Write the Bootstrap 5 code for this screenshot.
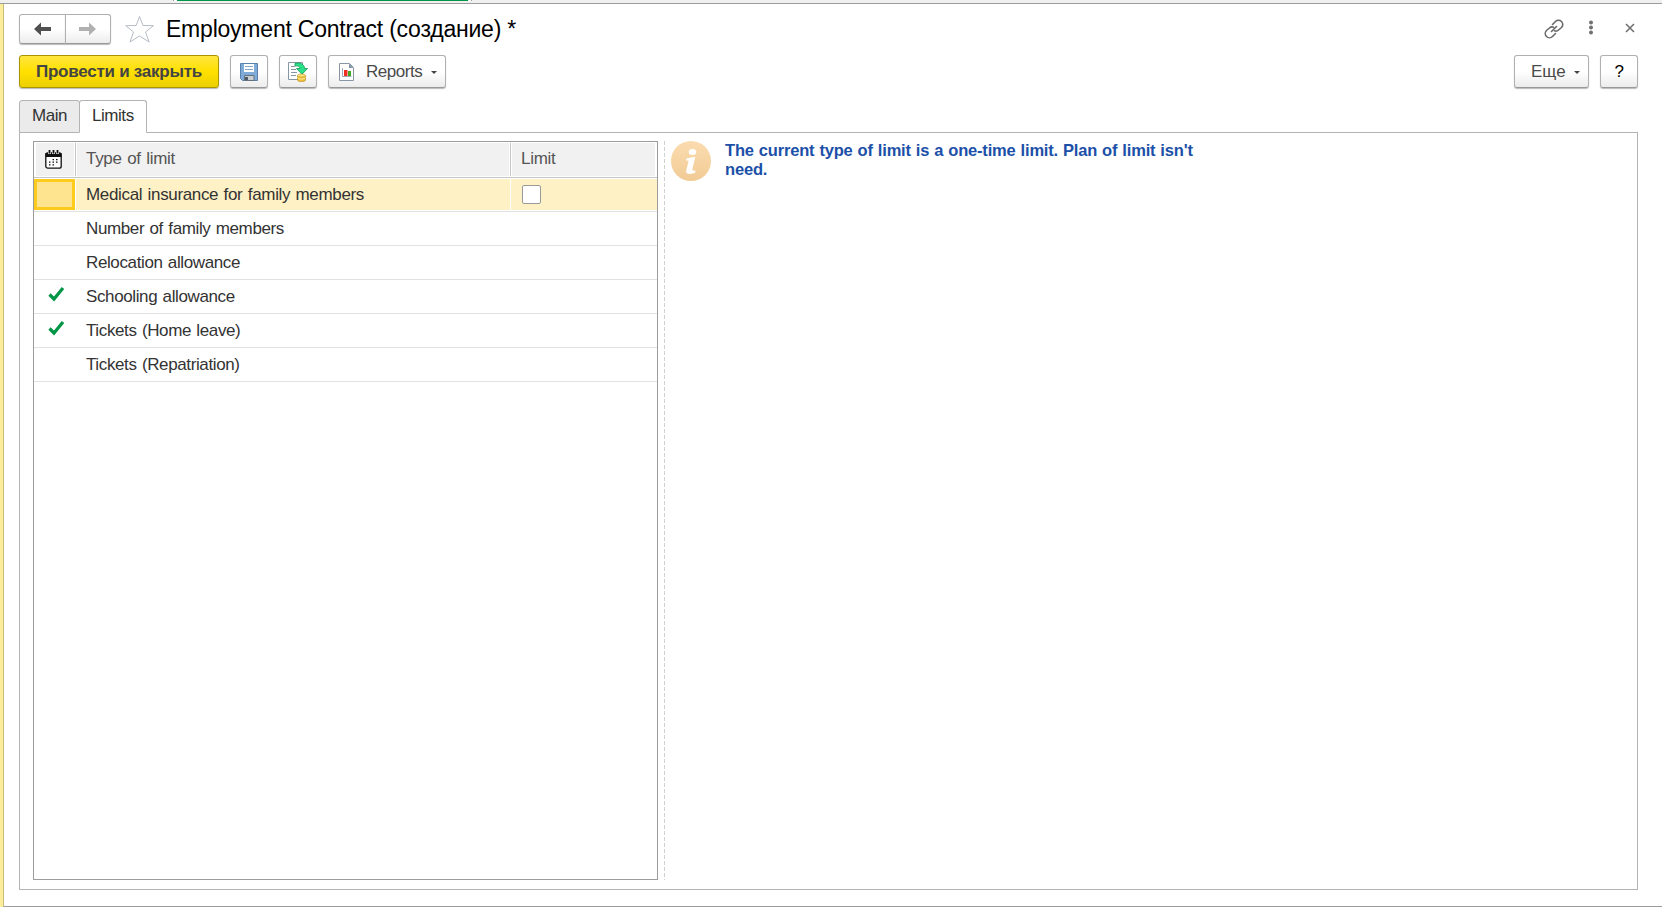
<!DOCTYPE html>
<html lang="ru">
<head>
<meta charset="utf-8">
<title>Employment Contract</title>
<link href="https://cdn.jsdelivr.net/npm/bootstrap@5.3.0/dist/css/bootstrap.min.css" rel="stylesheet">
<style>
body{font:17px/20px "Liberation Sans",Arial,sans-serif;letter-spacing:-.38px;word-spacing:1px;color:#333;background:#fff;height:907px}
svg{display:block;flex:none}
.topstrip{height:4px;background:#f0f0f0;border-bottom:1px solid #9c9c9c;flex:none}
.strip-tab{width:299px;margin-left:173px;border:solid #9c9c9c;border-width:0 1px;background:#fff;padding:0 3px}
.strip-tab div{height:1px;background:#009646}
.shell{background:#fbed9b}
.workarea{border-left:1px solid #c9bd7c;background:#fff;margin-left:3px;padding:10px 24px 16px 15px;border-bottom:1px solid #9c9c9c}
.title-row{height:31px}
.tool{--bs-btn-padding-x:0;--bs-btn-padding-y:0;--bs-btn-font-size:17px;--bs-btn-line-height:20px;--bs-btn-border-radius:3px;height:33px;border:1px solid #b0b0b0;border-bottom-color:#989898;background:linear-gradient(#fff 50%,#ececec);color:#4a4a4a;box-shadow:0 1px 1px #bbb;display:flex;align-items:center;letter-spacing:-.45px}
.tool.sq{width:38px;justify-content:center}
.tool.go{width:200px;justify-content:center;background:linear-gradient(#ffe63f,#ffe000 50%,#ecd000);border-color:#a89500;color:#444;font-weight:700;letter-spacing:-.25px;word-spacing:0}
.navs{width:92px;height:30px}
.navs .tool{height:30px;width:46px;justify-content:center}
.navs svg{position:relative;left:1px}
.navs .tool:last-child svg{left:-1px}
.star{margin-left:14px}
h1{font-size:23px;line-height:28px;letter-spacing:-.22px;word-spacing:0;color:#000;white-space:nowrap;font-weight:400;margin-left:11px;padding-top:1px}
.window-tools{gap:27px;padding-top:5px}
.window-tools svg:nth-child(2){margin:1px 5px 0 -2px}
.window-tools svg:nth-child(3){margin:4px 3px 0 0}
.bars{margin-top:10px;height:33px}
.bars .sq{margin-left:11px}
.bars .rep{width:118px;margin-left:11px;padding-left:10px}
.caret{width:0;border:3px solid transparent;border-top-color:#444;border-bottom:0;margin:2px 0 0 9px}
.rep span{margin-left:12px}
.more{width:75px;padding-left:16px}
.more span{letter-spacing:0}
.more .caret{margin-left:8px}
.help{color:#000}
.nav-tabs{--bs-nav-link-padding-x:0;--bs-nav-link-padding-y:0;border:0;margin-top:12px;position:relative;z-index:1}
.nav-tabs .nav-link{width:61px;height:33px;margin:0 0 -1px;padding:0 0 1px 12px;border:1px solid #b3b3b3;background:#ebebeb;color:#333;border-radius:3px 3px 0 0;line-height:20px;text-align:left;letter-spacing:-.45px}
.nav-tabs .nav-link.active{width:68px;border-color:#b3b3b3 #b3b3b3 #fff;background:#fff;color:#333}
.nav-item+.nav-item{margin-left:-1px}
.pane{border:1px solid #b3b3b3;padding:8px 0 9px 13px}
.grid-box{width:625px;border:1px solid #9c9c9c;flex:none}
.lrow{display:grid;grid-template-columns:42px 435px 1fr;height:34px;border-bottom:1px solid #e2e2e2}
.lrow>div{padding:7px 0 0 10px}
.lhead{height:36px;border-bottom:1px solid #c6c6c6;padding:1px;grid-template-columns:41px 435px 1fr;color:#555;letter-spacing:-.29px}
.lhead>div{background:#f1f1f1;border-right:1px solid #c6c6c6;padding:6px 0 0 10px;box-shadow:inset -1px 0 #fff,inset 1px 0 #fff}
.lhead>div:last-child{border:0}
.cal{margin-top:1px}
.sel{padding:1px 0}
.sel>div{background:#fef1c5;border-right:1px solid #fff;padding-top:6px;letter-spacing:-.34px}
.sel>div:first-child{background:#fee48f;border:3px solid #fccb1e;margin-right:1px}
.sel>div:last-child{border:0;padding-left:11px}
.box{width:19px;height:19px;border:1px solid #999;border-radius:2px;background:#fff}
.tick{margin-left:4px;margin-top:-1px}
.splitter{width:1px;margin:0 6px;background:repeating-linear-gradient(#d0d0d0 0 4px,transparent 4px 6px);flex:none}
.note{font-size:16.5px;font-weight:700;letter-spacing:-.18px;word-spacing:.6px;color:#1c50a8;line-height:19px;width:480px;margin-left:14px}
</style>
</head>
<body class="d-flex flex-column overflow-hidden">
<div class="topstrip"><div class="strip-tab"><div></div></div></div>
<div class="shell flex-grow-1 d-flex">
<main class="workarea flex-grow-1 d-flex flex-column">
<header class="title-row d-flex">
  <div class="btn-group navs">
    <button class="btn tool" aria-label="Back"><svg width="18" height="14" viewBox="0 0 18 14"><path d="M0 7 7 .5V5H17V9H7v4.5Z" fill="#505050"/></svg></button>
    <button class="btn tool" aria-label="Forward"><svg width="18" height="14" viewBox="0 0 18 14"><path d="M18 7 11 .5V5H1V9H11v4.5Z" fill="#b0b0b0"/></svg></button>
  </div>
  <svg width="30" height="30" viewBox="0 0 30 30" class="star"><path d="M14.500 2.500 18 11.500 28.400 11.700 20.500 18 24.200 28 14.500 22 5 28 8.500 18 .7 11.700 11.200 11.500Z" fill="#fff" stroke="#b5bcc6"/></svg>
  <h1 class="mb-0">Employment Contract (создание) *</h1>
  <div class="ms-auto d-flex window-tools">
    <svg width="20" height="20" viewBox="0 0 20 20" fill="none" stroke="#6a6a6a" stroke-width="1.6" stroke-linecap="round"><path d="M8.500 5.500 11.500 2.500a4 4 0 0 1 6 6L14.500 11a3.700 3.700 0 0 1-4 .8M11.500 14.500 8.500 17.500a4 4 0 0 1-6-6L5.500 9a3.700 3.700 0 0 1 4-.8M7.500 12.500l5-5"/></svg>
    <svg width="4" height="16" viewBox="0 0 4 16" fill="#707070"><circle cx="2" cy="2.500" r="2"/><circle cx="2" cy="7.500" r="2"/><circle cx="2" cy="12.500" r="2"/></svg>
    <svg width="10" height="10" viewBox="0 0 10 10" stroke="#707070" stroke-width="1.600"><path d="M1 1 9 9M9 1 1 9"/></svg>
  </div>
</header>
<div class="d-flex bars">
  <button class="btn tool go">Провести и закрыть</button>
  <button class="btn tool sq" aria-label="Save"><svg width="18" height="18" viewBox="0 0 18 18"><path d="M.5.5h17v17H2.500l-2-2Z" fill="#7fabd9" stroke="#5b80ab"/><path d="M4 1h10v8H4z" fill="#fff"/><path d="M5 3.500h8M5 6.500h8" stroke="#8ba6c4"/><path d="M4.500 12.500h9.500v5H4.500z" fill="#c9ced3" stroke="#65717d"/><path d="M5 14h3v3H5z" fill="#4f5d6b"/></svg></button>
  <button class="btn tool sq" aria-label="Post"><svg width="20" height="20" viewBox="0 0 20 20"><path d="M10 17.500H.5V.5H14.500V13" fill="#fff" stroke="#8796a5"/><path d="M3 4.500h4M3 7.500h5M3 10.500h6M3 13.500h5" stroke="#8796a5"/><path d="M7 1.300C12 .3 16.500 2 16.500 6.500H19.500L14 12.300 8.500 6.500H12C12 4.500 10 3.500 7 4Z" fill="#2be08b" stroke="#0b9a52" stroke-width=".8"/><path d="M9.500 13.500v4.500c0 2 8 2 8 0v-4.500Z" fill="#eec23e" stroke="#bd8d18" stroke-width=".7"/><ellipse cx="13.500" cy="13.500" rx="4" ry="1.500" fill="#ffe681" stroke="#bd8d18" stroke-width=".6"/><path d="M9.500 15.500c0 2 8 2 8 0" fill="none" stroke="#fff0a0"/></svg></button>
  <button class="btn tool rep"><svg width="15" height="18" viewBox="0 0 15 18"><path d="M.5.5H10.500L14.500 4.500V17.500H.5Z" fill="#fff" stroke="#8796a5"/><path d="M10 .5V5h4.500Z" fill="#8796a5"/><path d="M5 7h3.500v6H5z" fill="#ee2f22"/><path d="M9 8h3v5H9z" fill="#45a523"/><path d="M3.500 5v8.500H12.500" fill="none" stroke="#8796a5" stroke-width=".8"/></svg><span>Reports</span><i class="caret"></i></button>
  <button class="btn tool more ms-auto"><span>Еще</span><i class="caret"></i></button>
  <button class="btn tool sq help">?</button>
</div>
<ul class="nav nav-tabs">
  <li class="nav-item"><button class="nav-link">Main</button></li>
  <li class="nav-item"><button class="nav-link active">Limits</button></li>
</ul>
<section class="pane flex-grow-1 d-flex">
  <div class="grid-box">
    <div class="lrow lhead"><div><svg class="cal" width="17" height="19" viewBox="0 0 17 19"><rect x=".8" y="2.800" width="15.400" height="15.400" rx="2" fill="#fff" stroke="#111" stroke-width="1.300"/><path d="M.5 3h16v4H.5z" fill="#111"/><path d="M4.500 0v4M8.500 0v4M12.500 0v4" stroke="#f1f1f1" stroke-width="3"/><path d="M4.500 0v3.500M8.500 0v3.500M12.500 0v3.500" stroke="#111" stroke-width="1.800"/><path d="M7.500 9.700h6.500M4 12.200h10M4 14.800h6" stroke="#111" stroke-width="1.200" stroke-dasharray="1.500 2"/></svg></div><div>Type of limit</div><div>Limit</div></div>
    <div class="lrow sel"><div></div><div>Medical insurance for family members</div><div><div class="box"></div></div></div>
    <div class="lrow"><div></div><div>Number of family members</div></div>
    <div class="lrow"><div></div><div>Relocation allowance</div></div>
    <div class="lrow"><div><svg class="tick" width="17" height="16" viewBox="0 0 17 16"><path d="M1.500 8.500 6 13 15 2" fill="none" stroke="#009646" stroke-width="3.200"/></svg></div><div>Schooling allowance</div></div>
    <div class="lrow"><div><svg class="tick" width="17" height="16" viewBox="0 0 17 16"><path d="M1.500 8.500 6 13 15 2" fill="none" stroke="#009646" stroke-width="3.200"/></svg></div><div>Tickets (Home leave)</div></div>
    <div class="lrow"><div></div><div>Tickets (Repatriation)</div></div>
  </div>
  <div class="splitter"></div>
  <svg width="40" height="40" viewBox="0 0 40 40"><defs><linearGradient id="g" x2="0" y2="1"><stop stop-color="#fbdcb0"/><stop offset="1" stop-color="#f1cb95"/></linearGradient></defs><circle cx="20" cy="20" r="20" fill="url(#g)"/><ellipse cx="21.500" cy="11" rx="3.800" ry="3" fill="#fff"/><path d="M15.500 17.500Q20 16 24.300 16L21.300 28.500Q21 30 24.500 29.500L24 32Q20 33 17.500 33 14.500 32.500 15.300 29L17.500 20.500Q18 19 15 19.500Z" fill="#fff"/></svg>
  <div class="note">The current type of limit is a one-time limit. Plan of limit isn't need.</div>
</section>
</main>
</div>
<script src="https://cdn.jsdelivr.net/npm/bootstrap@5.3.0/dist/js/bootstrap.bundle.min.js"></script>
</body>
</html>
